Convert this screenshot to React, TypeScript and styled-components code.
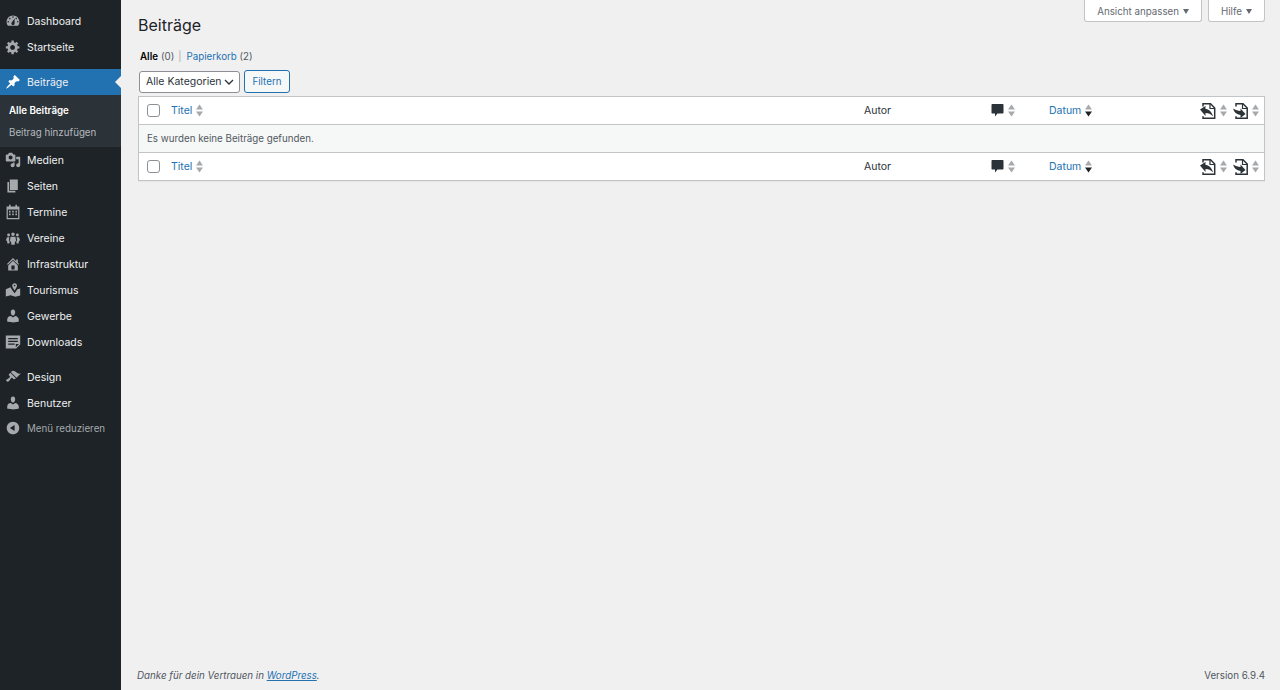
import React from 'react';
import styled, { createGlobalStyle } from 'styled-components';

const GlobalStyle = createGlobalStyle`
  html, body {
    margin: 0;
    padding: 0;
    height: 100%;
    background: #f0f0f1;
  }

  body {
    font-family: Inter, "Liberation Sans", sans-serif;
    font-size: 9.75px;
    color: #3c434a;
  }

  #root {
    height: 100%;
  }
`;

const Page = styled.div`
  display: flex;
  height: 690px;
  overflow: hidden;
`;

const Sidebar = styled.nav`
  width: 121px;
  flex-shrink: 0;
  background: #1d2327;
  padding-top: 8px;
  box-sizing: border-box;
`;

const MenuItem = styled.a<{ $active?: boolean; $muted?: boolean; $gap?: boolean }>`
  position: relative;
  display: flex;
  align-items: center;
  height: 26px;
  margin-top: ${p => (p.$gap ? '9px' : '0')};
  padding-left: 5px;
  gap: 6px;
  font-size: ${p => (p.$muted ? '9.75px' : '10.5px')};
  background: ${p => (p.$active ? '#2271b1' : 'transparent')};
  color: ${p => (p.$muted ? '#a7aaad' : '#f0f0f1')};

  svg {
    flex-shrink: 0;
    fill: ${p => (p.$active ? '#fff' : '#a7aaad')};
  }

  ${p => p.$active && `
    &::after {
      content: '';
      position: absolute;
      right: 0;
      top: 50%;
      transform: translateY(-50%);
      border: 6px solid transparent;
      border-right-color: #f0f0f1;
      border-left-width: 0;
    }
  `}
`;

const CollapseItem = styled(MenuItem)`
  height: 24px;
`;

const SubMenu = styled.div`
  display: flex;
  flex-direction: column;
  background: #2c3338;
  padding: 4px 0;
`;

const SubItem = styled.a<{ $current?: boolean }>`
  display: flex;
  align-items: center;
  height: 22px;
  padding-left: 9px;
  font-size: 9.75px;
  font-weight: ${p => (p.$current ? 600 : 400)};
  color: ${p => (p.$current ? '#fff' : 'rgba(240, 246, 252, 0.7)')};
`;

const Main = styled.main`
  flex: 1;
  display: flex;
  flex-direction: column;
  padding: 0 15px 0 17px;
  min-width: 0;
`;

const TopRow = styled.header`
  display: flex;
  justify-content: space-between;
  align-items: flex-start;
  height: 47px;
`;

const Title = styled.h1`
  margin: 14px 0 0;
  font-size: 16px;
  line-height: 22px;
  font-weight: 400;
  color: #1d2327;
`;

const MetaTabs = styled.div`
  display: flex;
  gap: 6px;
`;

const MetaTab = styled.button`
  display: flex;
  align-items: center;
  gap: 4px;
  height: 22px;
  padding: 1px 12px 0;
  box-sizing: border-box;
  background: #fff;
  border: 1px solid #c3c4c7;
  border-top: none;
  border-radius: 0 0 3px 3px;
  font: inherit;
  font-size: 9.75px;
  color: #646970;

  &::after {
    content: '';
    border: 3.5px solid transparent;
    border-top: 5px solid #646970;
    border-bottom: none;
  }
`;

const Views = styled.div`
  display: flex;
  align-items: center;
  height: 18px;
  margin-left: 2px;
  font-size: 9.75px;
  color: #50575e;
`;

const ViewCurrent = styled.strong`
  color: #000;
  font-weight: 600;
  margin-right: 3px;
`;

const Divider = styled.span`
  margin: 0 5px 0 4px;
  color: #a7aaad;
`;

const BlueLink = styled.a`
  color: #2271b1;
`;

const Filters = styled.div`
  display: flex;
  align-items: center;
  gap: 4px;
  height: 23px;
  margin: 5px 0 3px 1px;
`;

const SelectBox = styled.div`
  display: flex;
  align-items: center;
  justify-content: space-between;
  width: 101px;
  height: 22px;
  padding: 0 5px 0 6px;
  box-sizing: border-box;
  background: #fff;
  border: 1px solid #8c8f94;
  border-radius: 3px;
  color: #2c3338;
  font-size: 10.5px;
  white-space: nowrap;
`;

const FilterButton = styled.button`
  width: 46px;
  height: 23px;
  padding: 0;
  background: #f6f7f7;
  border: 1px solid #2271b1;
  border-radius: 3px;
  font: inherit;
  font-size: 9.75px;
  color: #2271b1;
`;

const Table = styled.div`
  border: 1px solid #c3c4c7;
  box-shadow: 0 1px 1px rgba(0, 0, 0, 0.04);
  background: #fff;
`;

const HeadRow = styled.div<{ $top?: boolean }>`
  display: grid;
  grid-template-columns: 32px 693px 127px 58px 151px 33px 31px;
  align-items: center;
  height: 27px;
  background: #fff;
  color: #2c3338;
  border-bottom: ${p => (p.$top ? '1px solid #c3c4c7' : 'none')};
  border-top: ${p => (p.$top ? 'none' : '1px solid #c3c4c7')};
`;

const EmptyRow = styled.div`
  display: flex;
  align-items: center;
  height: 27px;
  padding-left: 8px;
  background: #f6f7f7;
  color: #50575e;
  font-size: 9.75px;
`;

const CheckCell = styled.div`
  display: flex;
  padding-left: 8px;
`;

const Check = styled.span`
  display: block;
  width: 13px;
  height: 13px;
  box-sizing: border-box;
  background: #fff;
  border: 1px solid #8c8f94;
  border-radius: 3px;
`;

const HeadCell = styled.div`
  display: flex;
  align-items: center;
  gap: 4px;
  font-size: 10.5px;
`;

const SortLink = styled.a`
  color: #2271b1;
`;

const PlainLabel = styled.span`
  color: #2c3338;
`;

const Spacer = styled.div`
  flex: 1;
`;

const Footer = styled.footer`
  display: flex;
  justify-content: space-between;
  align-items: center;
  height: 30px;
  margin-left: -1px;
  font-size: 9.75px;
  color: #50575e;
`;

const FooterNote = styled.em`
  font-style: italic;
`;

const FooterLink = styled.a`
  color: #2271b1;
  text-decoration: underline;
`;

const Icon = ({ d }: { d: string }) => (
  <svg width="16" height="16" viewBox="0 0 20 20" fillRule="evenodd">
    <path d={d} />
  </svg>
);

const SortArrows = ({ active }: { active?: boolean }) => (
  <svg width="7" height="13" viewBox="0 0 7 13">
    <path d="M3.5 0.5L7 5.5H0z" fill="#a7aaad" />
    <path d="M0 7.5h7L3.5 12.5z" fill={active ? '#1d2327' : '#a7aaad'} />
  </svg>
);

const CommentIcon = () => (
  <svg width="13" height="15" viewBox="0 0 13 15">
    <path d="M1.500 1h10c.6 0 1 .4 1 1v7.500c0 .6-.4 1-1 1H6.500L4 13.500v-3H1.500c-.6 0-1-.4-1-1V2c0-.6.4-1 1-1z" fill="#2c3338" />
  </svg>
);

const RestoreDocIcon = () => (
  <svg width="16" height="16" viewBox="0 0 16 16">
    <path d="M3 3.500V.8h7.500l4.200 4.200v10.200H3v-2" fill="none" stroke="#2c3338" strokeWidth="1.500" />
    <path d="M10 1v4.500h4.500" fill="none" stroke="#2c3338" strokeWidth="1.200" />
    <path d="M0 6.500l5.500-3.500v3c3 0 6 2 7.500 7.500-2-2.500-4.500-3.500-7.500-3.500v3z" fill="#2c3338" />
  </svg>
);

const MoveDocIcon = () => (
  <svg width="15" height="16" viewBox="0 0 15 16">
    <path d="M3 3.500V.8h7l4.200 4.200v10.200H3v-2" fill="none" stroke="#2c3338" strokeWidth="1.500" />
    <path d="M9.500 1v4.500h4.500" fill="none" stroke="#2c3338" strokeWidth="1.200" />
    <path d="M12.500 11L7.500 5.500v2.500C5 8 2.500 7 0 5.500c1 3.500 3.500 6 7.500 6.500v3z" fill="#2c3338" />
  </svg>
);

const ChevronIcon = () => (
  <svg width="10" height="6" viewBox="0 0 10 6">
    <path d="M1 1l4 4 4-4" fill="none" stroke="#2c3338" strokeWidth="1.300" />
  </svg>
);

const icons = {
  dashboard: 'M3.76 16h12.48c1.100-1.370 1.760-3.110 1.760-5 0-4.420-3.580-8-8-8s-8 3.580-8 8c0 1.890.66 3.630 1.760 5zM10 4c.55 0 1 .45 1 1s-.45 1-1 1-1-.45-1-1 .45-1 1-1zM6 6c.55 0 1 .45 1 1s-.45 1-1 1-1-.45-1-1 .45-1 1-1zm8 0c.55 0 1 .45 1 1s-.45 1-1 1-1-.45-1-1 .45-1 1-1zm-5.370 5.550L12 7v6c0 1.100-.9 2-2 2s-2-.9-2-2c0-.57.24-1.080.63-1.450zM4 10c.55 0 1 .45 1 1s-.45 1-1 1-1-.45-1-1 .45-1 1-1zm12 0c.55 0 1 .45 1 1s-.45 1-1 1-1-.45-1-1 .45-1 1-1z',
  gear: 'M18 12h-2.180c-.17.7-.44 1.350-.81 1.930l1.540 1.540-2.100 2.100-1.540-1.540c-.58.36-1.230.63-1.910.79V19H8v-2.180c-.68-.16-1.330-.43-1.910-.79l-1.540 1.540-2.120-2.120 1.540-1.540c-.36-.58-.63-1.230-.79-1.910H1V9.030h2.170c.16-.7.44-1.350.8-1.940L2.430 5.550l2.100-2.100 1.540 1.540c.58-.37 1.240-.64 1.930-.81V2h3v2.180c.68.16 1.330.43 1.910.79l1.540-1.540 2.120 2.120-1.540 1.540c.36.59.64 1.240.8 1.940H18V12zm-8.500 1.500c1.660 0 3-1.340 3-3s-1.340-3-3-3-3 1.340-3 3 1.340 3 3 3z',
  pin: 'M10.440 3.020l1.820-1.820 6.360 6.350-1.830 1.820c-1.050-.68-2.480-.57-3.410.36l-.75.75c-.92.93-1.040 2.350-.35 3.410l-1.830 1.820-2.410-2.410-2.800 2.790c-.42.42-3.380 2.710-3.800 2.290s1.860-3.390 2.280-3.810l2.790-2.790L4.100 9.360l1.830-1.820c1.050.69 2.480.57 3.400-.36l.75-.75c.93-.92 1.050-2.350.36-3.410z',
  media: 'M13 11V4c0-.55-.45-1-1-1h-1.670L9 1H5L3.670 3H2c-.55 0-1 .45-1 1v7c0 .55.45 1 1 1h10c.55 0 1-.45 1-1zM7 4.500c1.380 0 2.500 1.120 2.500 2.500S8.380 9.500 7 9.500 4.500 8.380 4.500 7 5.620 4.500 7 4.500zM14 6h5v10.500c0 1.380-1.120 2.500-2.500 2.500S14 17.880 14 16.500s1.120-2.500 2.500-2.500c.17 0 .34.02.5.05V9h-3V6zm-4 8.050V13h2v3.500c0 1.380-1.120 2.500-2.500 2.500S7 17.880 7 16.500 8.120 14 9.500 14c.17 0 .34.02.5.05z',
  page: 'M6 15V2h10v13H6zm-1 1h8v2H3V5h2v11z',
  calendar: 'M5 1h2v2h6V1h2v2h3v16H2V3h3V1zM3.500 7v10.500h13V7h-13zM5 8.500h2v2H5v-2zm4 0h2v2H9v-2zm4 0h2v2h-2v-2zM5 12h2v2H5v-2zm4 0h2v2H9v-2zm4 0h2v2h-2v-2z',
  groups: 'M10 3a2.200 2.200 0 1 1 0 4.400A2.200 2.200 0 0 1 10 3zM4.500 4.500a1.800 1.800 0 1 1 0 3.600 1.800 1.800 0 0 1 0-3.600zm11 0a1.800 1.800 0 1 1 0 3.600 1.800 1.800 0 0 1 0-3.600zM7 8.500h6l1 5.500-1.500.5-.5 4H8l-.5-4L6 14l1-5.500zM2.500 9h3L4.800 13l1 1-.3 3H3l-.5-3.500L1 13l1.500-4zm12 0h3l1.500 4-1.500.5L17 17h-2.500l-.3-3 1-1-.7-4z',
  home: 'M16 8.500l1.530 1.530-1.060 1.060L10 4.620l-6.470 6.470-1.060-1.060L10 2.500l4 4v-2h2v4zm-6-2.460l6 5.990V18H4v-5.970zM12 17v-5H8v5h4z',
  map: 'M12 1.500c1.900 0 3 1.400 3 3 0 1.800-1.700 4.300-3 6-1.300-1.700-3-4.200-3-6 0-1.600 1.100-3 3-3zm0 2a1 1 0 1 0 0 2 1 1 0 0 0 0-2zM1 9l6-2.500.8 1.500C8.500 9.500 10.500 12 12 14c1-1.300 2.500-3.300 3.500-5L19 8v9l-6 1.500-6-2-6 1.500V9z',
  user: 'M10 9.250c-2.270 0-2.730-3.440-2.730-3.440C7 4.020 7.820 2 9.970 2c2.160 0 2.980 2.020 2.710 3.810 0 0-.41 3.440-2.680 3.440zm0 2.570L12.720 10c2.390 0 4.520 2.330 4.520 4.530v2.490s-3.650 1.130-7.240 1.130c-3.650 0-7.240-1.130-7.240-1.130v-2.490c0-2.250 1.940-4.480 4.470-4.480z',
  forms: 'M1 2h18v11l-5 5H1V2zm3 3v1.500h12V5H4zm0 3.500V10h12V8.500H4zm0 3.500v1.500h8V12H4zm9.500 4.500l4-4h-4v4z',
  brush: 'M14.480 11.060L7.410 3.990l1.500-1.500c.5-.56 2.300-.47 3.510.32 1.210.8 1.430 1.280 2.910 2.100 1.180.64 2.450 1.260 4.450.85zm-.71.71L6.700 4.700 4.930 6.470c-.39.39-.39 1.020 0 1.410l1.060 1.060c.39.39.39 1.030 0 1.420-.6.6-1.430 1.110-2.210 1.690-.35.26-.7.53-1.010.84C1.430 13.230 1 14.380 2 15.300c1.060 1.050 2.050.62 3.400-.73.31-.31.58-.66.84-1.010.58-.78 1.090-1.610 1.690-2.210.39-.39 1.020-.39 1.410 0l1.060 1.060c.39.39 1.020.39 1.410 0z',
  collapse: 'M10 2.160c4.330 0 7.840 3.510 7.840 7.840s-3.510 7.840-7.840 7.840S2.160 14.330 2.160 10 5.710 2.160 10 2.160zm2 11.720V6.120L6.180 9.970z',
};

const TableHead = ({ top }: { top?: boolean }) => (
  <HeadRow $top={top}>
    <CheckCell><Check /></CheckCell>
    <HeadCell><SortLink>Titel</SortLink><SortArrows /></HeadCell>
    <HeadCell><PlainLabel>Autor</PlainLabel></HeadCell>
    <HeadCell><CommentIcon /><SortArrows /></HeadCell>
    <HeadCell><SortLink>Datum</SortLink><SortArrows active /></HeadCell>
    <HeadCell><RestoreDocIcon /><SortArrows /></HeadCell>
    <HeadCell><MoveDocIcon /><SortArrows /></HeadCell>
  </HeadRow>
);

const App = () => (
  <Page>
    <GlobalStyle />
    <Sidebar>
      <MenuItem><Icon d={icons.dashboard} />Dashboard</MenuItem>
      <MenuItem><Icon d={icons.gear} />Startseite</MenuItem>
      <MenuItem $active $gap><Icon d={icons.pin} />Beiträge</MenuItem>
      <SubMenu>
        <SubItem $current>Alle Beiträge</SubItem>
        <SubItem>Beitrag hinzufügen</SubItem>
      </SubMenu>
      <MenuItem><Icon d={icons.media} />Medien</MenuItem>
      <MenuItem><Icon d={icons.page} />Seiten</MenuItem>
      <MenuItem><Icon d={icons.calendar} />Termine</MenuItem>
      <MenuItem><Icon d={icons.groups} />Vereine</MenuItem>
      <MenuItem><Icon d={icons.home} />Infrastruktur</MenuItem>
      <MenuItem><Icon d={icons.map} />Tourismus</MenuItem>
      <MenuItem><Icon d={icons.user} />Gewerbe</MenuItem>
      <MenuItem><Icon d={icons.forms} />Downloads</MenuItem>
      <MenuItem $gap><Icon d={icons.brush} />Design</MenuItem>
      <MenuItem><Icon d={icons.user} />Benutzer</MenuItem>
      <CollapseItem $muted><Icon d={icons.collapse} />Menü reduzieren</CollapseItem>
    </Sidebar>
    <Main>
      <TopRow>
        <Title>Beiträge</Title>
        <MetaTabs>
          <MetaTab>Ansicht anpassen</MetaTab>
          <MetaTab>Hilfe</MetaTab>
        </MetaTabs>
      </TopRow>
      <Views>
        <ViewCurrent>Alle</ViewCurrent> (0)
        <Divider>|</Divider>
        <BlueLink>Papierkorb</BlueLink>&nbsp;(2)
      </Views>
      <Filters>
        <SelectBox>Alle Kategorien<ChevronIcon /></SelectBox>
        <FilterButton>Filtern</FilterButton>
      </Filters>
      <Table>
        <TableHead top />
        <EmptyRow>Es wurden keine Beiträge gefunden.</EmptyRow>
        <TableHead />
      </Table>
      <Spacer />
      <Footer>
        <FooterNote>Danke für dein Vertrauen in <FooterLink>WordPress</FooterLink>.</FooterNote>
        <span>Version 6.9.4</span>
      </Footer>
    </Main>
  </Page>
);

export default App;
